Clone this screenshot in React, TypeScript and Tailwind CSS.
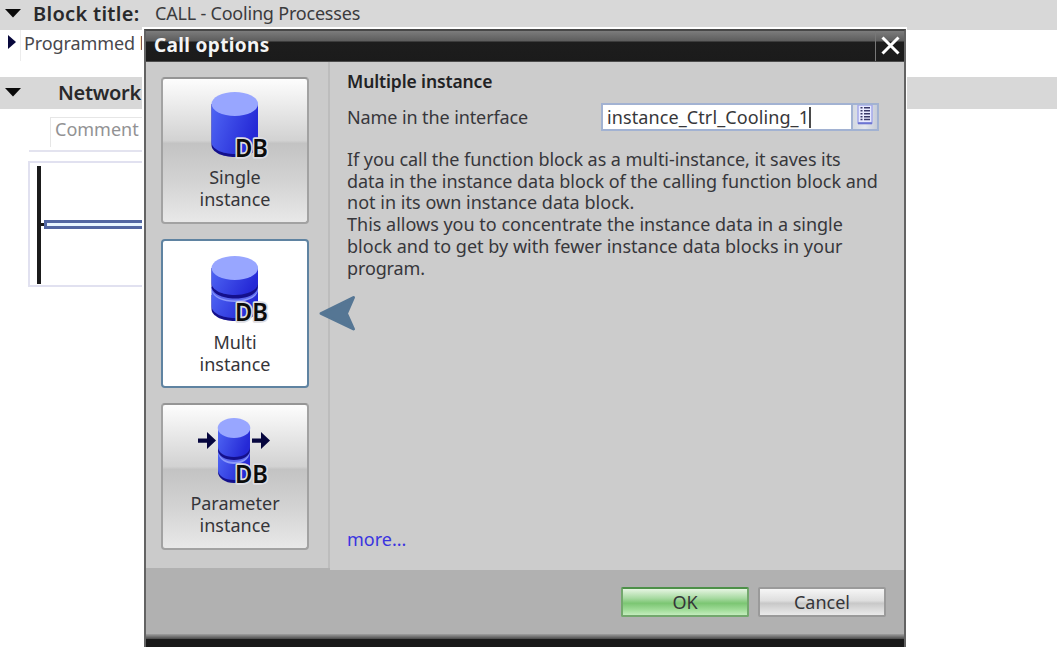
import type { ReactNode } from "react";
import { clsx } from "clsx";

type Variant = "single" | "multi" | "parameter";

/** Lines of the help text, broken where the dialog breaks them */
const DESCRIPTION = [
  { text: "If you call the function block as a multi-instance, it saves its", tracking: "tracking-[-0.06px]" },
  { text: "data in the instance data block of the calling function block and", tracking: "tracking-[-0.04px]" },
  { text: "not in its own instance data block.", tracking: "tracking-[0.03px]" },
  { text: "This allows you to concentrate the instance data in a single", tracking: "tracking-[0px]" },
  { text: "block and to get by with fewer instance data blocks in your", tracking: "tracking-[0.02px]" },
  { text: "program.", tracking: "tracking-[-0.12px]" },
];

function DbLabel() {
  return (
    <text
      x="72"
      y="77.500"
      fontSize="25"
      fontWeight="600"
      textLength="33"
      lengthAdjust="spacingAndGlyphs"
      fill="#0c0c0c"
      stroke="#dcdce2"
      strokeWidth="3.500"
      strokeLinejoin="round"
      paintOrder="stroke"
      className="font-['Noto_Sans',sans-serif]"
    >
      DB
    </text>
  );
}

function DatabaseIcon({ variant }: { variant: Variant }) {
  const id = `body-${variant}`;
  return (
    <svg width="144" height="90" viewBox="0 0 144 90" className="block shrink-0">
      <defs>
        <linearGradient id={id} x1="0" y1="0" x2="1" y2="0.35">
          <stop offset="0" stopColor="#4f66f4" />
          <stop offset="1" stopColor="#2529d6" />
        </linearGradient>
      </defs>
      {variant === "single" && (
        <>
          <path d="M48.500 25V66C48.500 73 59 78 72 78S95 73 95 66V25Z" fill="#14108c" />
          <path d="M48.500 25V63C48.500 70 59 75 72 75S95 70 95 63V25Z" fill={`url(#${id})`} />
          <ellipse cx="71.800" cy="25" rx="23.300" ry="12" fill="#98a6ff" />
          <DbLabel />
        </>
      )}
      {variant === "multi" && (
        <g transform="translate(0 2)">
          <path d="M48.500 52V66C48.500 73 59 78 72 78S95 73 95 66V52Z" fill="#14108c" />
          <path d="M48.500 47V63C48.500 70 59 75 72 75S95 70 95 63V47Z" fill={`url(#${id})`} />
          <path d="M48.500 47C50 55 60 59 72 59S94 55 95 47V44H48.500Z" fill="#8b98fb" />
          <path d="M48.500 46C50 53 60 57.500 72 57.500S94 53 95 46V44H48.500Z" fill="#5c69ee" />
          <path d="M48.500 25V43C48.500 50.500 59 55.500 72 55.500S95 50.500 95 43V25Z" fill="#14108c" />
          <path d="M48.500 25V40C48.500 47 59 52 72 52S95 47 95 40V25Z" fill={`url(#${id})`} />
          <ellipse cx="71.800" cy="25" rx="23.300" ry="12" fill="#98a6ff" />
          <DbLabel />
        </g>
      )}
      {variant === "parameter" && (
        <>
          <path d="M55 52V67C55 73 62 78 71 78S87 73 87 67V52Z" fill="#14108c" />
          <path d="M55 47V65C55 71 62 75 71 75S87 71 87 65V47Z" fill={`url(#${id})`} />
          <path d="M55 47C56 55 63 59 71 59S86 55 87 47V44H55Z" fill="#8b98fb" />
          <path d="M55 46C56 53 63 57 71 57S86 53 87 46V44H55Z" fill="#5c69ee" />
          <path d="M55 23V45C55 51 62 55 71 55S87 51 87 45V23Z" fill="#14108c" />
          <path d="M55 23V42C55 48 62 52 71 52S87 48 87 42V23Z" fill={`url(#${id})`} />
          <ellipse cx="71" cy="23" rx="16.300" ry="10" fill="#98a6ff" />
          <path d="M35 33.500H44V27L53 35.500L44 44V37.700H35Z" fill="#06063e" />
          <path d="M89 33.500H98V27L107 35.500L98 44V37.700H89Z" fill="#06063e" />
          <DbLabel />
        </>
      )}
    </svg>
  );
}

function InstanceButton({
  variant,
  title,
  selected,
}: {
  variant: Variant;
  title: string;
  selected?: boolean;
}) {
  return (
    <button
      className={clsx(
        "flex w-[148px] shrink-0 flex-col items-center rounded-[4px] border-2 text-[18px] leading-[21.500px] text-[#353539]",
        selected
          ? "h-[149px] border-[#5f83a1] bg-white"
          : "h-[147px] border-[#a2a2a2] border-t-[#959595] bg-[linear-gradient(#fdfdfd_0%,#e4e4e4_25%,#d2d2d2_43%,#c3c3c3_45%,#d2d2d2_70%,#e8e8e8_100%)]",
      )}
    >
      <DatabaseIcon variant={variant} />
      <span className={clsx("block", selected ? "mt-[1px]" : "-mt-[2px]")}>
        {title}
        <br />
        instance
      </span>
    </button>
  );
}

function FooterButton({ primary, children }: { primary?: boolean; children: ReactNode }) {
  return (
    <button
      className={clsx(
        "h-[30px] w-[128px] rounded-[2px] border-2 text-[18px] leading-[26px] text-[#353539]",
        primary
          ? "border-[#73a86d] border-t-[#4d9048] bg-[linear-gradient(#e6f5e2_0%,#a8daa2_35%,#7cc673_55%,#a0dc98_80%,#c4edbd_100%)]"
          : "border-[#9a9a9a] bg-[linear-gradient(#f6f6f6_0%,#dedede_45%,#c8c8c8_55%,#dcdcdc_80%,#eaeaea_100%)]",
      )}
    >
      {children}
    </button>
  );
}

function Collapse() {
  return (
    <svg width="16" height="9" viewBox="0 0 16 9" className="shrink-0">
      <path d="M0 0H16L8 8.500Z" fill="#0a0a0a" />
    </svg>
  );
}

function Editor() {
  return (
    <div className="flex h-full flex-col">
      <div className="flex h-[30px] shrink-0 items-center bg-[#d8d8d8] pb-[4px] pl-[5px]">
        <Collapse />
        <span className="ml-[12px] w-[122px] whitespace-nowrap pt-[2px] text-[20px] font-semibold leading-[26px] tracking-[0.3px] text-[#29292b]">
          Block title:
        </span>
        <span className="text-[18px] tracking-[-0.2px] text-[#3b3b3d]">CALL - Cooling Processes</span>
      </div>
      <div className="flex h-[47px] shrink-0 items-start pl-[8px]">
        <svg width="9" height="14" viewBox="0 0 9 14" className="mt-[5px]">
          <path d="M0 0L8 7L0 14Z" fill="#08083c" />
        </svg>
        <div className="ml-[3px] h-[31px] border-l border-[#ececec] pl-[3px] text-[18px] leading-[27px] tracking-[-0.1px] text-[#48484c]">
          Programmed by
        </div>
      </div>
      <div className="flex h-[32px] shrink-0 items-center bg-[#d8d8d8] pb-[2px] pl-[5px]">
        <Collapse />
        <span className="ml-[37px] pt-[2px] text-[20px] font-semibold leading-[28px] tracking-[-0.3px] text-[#29292b]">
          Network 1:
        </span>
      </div>
      <div className="ml-[50px] mt-[8px] h-[30px] w-[240px] border-l border-t border-[#e6e6e6] pl-[4px] text-[18px] leading-[22px] text-[#929294]">
        Comment
      </div>
      <div className="ml-[29px] mt-[3px] h-[2px] w-[240px] bg-[#e3e3ef]" />
      <div className="ml-[28px] mt-[9px] flex h-[126px] w-[240px] items-center border-2 border-[#e1e1f0] pl-[7px] pt-[1px]">
        <div className="h-[118px] w-[4px] bg-[#1b1b1b]" />
        <div className="h-[3px] w-[3px] bg-[#1b1b1b]" />
        <div className="h-[9px] flex-1 border-[3px] border-r-0 border-[#5266a2] bg-[#e8f5ff]" />
      </div>
    </div>
  );
}

function NameField() {
  return (
    <div className="flex h-[28px] w-[278px] border-2 border-[#a2b2d2] bg-white">
      <div className="flex flex-1 items-center pb-[1px] pl-[4px] text-[18px] leading-[22px] text-[#37373a]">
        <span className="tracking-[0.1px]">instance_Ctrl_Cooling_1</span>
        <span className="mt-[1px] h-[21px] w-[2px] bg-[#4a4a4a]" />
      </div>
      <div className="flex w-[26px] justify-center border-l-2 border-[#a2b2d2] bg-[linear-gradient(90deg,#d4d9e2,#e4e7ed_50%,#c7ccd8)]">
        <svg width="18" height="20" viewBox="0 0 18 20">
          <path d="M2 0H16V18H2Z" fill="#e8eaff" stroke="#a4a9ea" strokeWidth="1.500" />
          <path d="M2 18.300H16" stroke="#6c74d2" strokeWidth="2" />
          <path
            d="M4.500 2.700H6.500M4.500 5.700H6.500M4.500 8.700H6.500M4.500 11.700H6.500M4.500 14.500H6.500M8 2.700H14M8 5.700H14M8 8.700H14M8 11.700H14M8 14.500H14"
            stroke="#383868"
            strokeWidth="1.500"
          />
        </svg>
      </div>
    </div>
  );
}

function CallOptionsDialog() {
  return (
    <div className="absolute left-[142px] top-[27px] flex h-[621px] w-[765px] flex-col border-2 border-r border-b border-white bg-[#b1b1b1]">
      <div className="flex h-full flex-col border-x-2 border-t-2 border-[#636363] border-t-[#484848]">
        <div className="flex h-[31px] shrink-0 border-b border-[#4c4c4c] bg-[linear-gradient(#7c7c7c_0px,#5d5d5d_10px,#1d1d1d_11px,#1b1b1b_31px)]">
          <div className="flex-1 pl-[8px] text-[19px] font-bold leading-[29px] tracking-[0.35px] text-[#f4f4f4]">Call options</div>
          <div className="flex w-[29px] items-center justify-center border-l border-[#777777]">
            <svg width="19" height="19" viewBox="0 0 19 19" className="-mt-[2px]">
              <path d="M1.500 1.500L17.500 17.500M17.500 1.500L1.500 17.500" stroke="#ffffff" strokeWidth="3" />
            </svg>
          </div>
        </div>

        <div className="flex h-[508px] shrink-0">
          <div className="flex h-[506px] w-[184px] shrink-0 flex-col gap-[15px] border-r-2 border-[#bdbdbd] bg-[#cbcbcb] pl-[15px] pt-[15px]">
            <InstanceButton variant="single" title="Single" />
            <InstanceButton variant="multi" title="Multi" selected />
            <InstanceButton variant="parameter" title="Parameter" />
          </div>
          <div className="flex flex-1 flex-col bg-[#cccccc] pl-[17px] pr-[25px] text-[18px] text-[#37373b]">
            <div className="mt-[8px] h-[22px] text-[17.500px] font-semibold leading-[23px] tracking-[-0.12px] text-[#222224]">
              Multiple instance
            </div>
            <div className="mt-[10px] flex h-[30px] items-center justify-between">
              <span className="pt-[1px] tracking-[-0.1px]">Name in the interface</span>
              <NameField />
            </div>
            <div className="mt-[17px] leading-[21.700px]">
              {DESCRIPTION.map((line) => (
                <div key={line.text} className={clsx("whitespace-nowrap", line.tracking)}>
                  {line.text}
                </div>
              ))}
            </div>
            <div className="mb-[20px] mt-auto leading-[22px] text-[#3a34e0]">more...</div>
          </div>
        </div>

        <div className="flex flex-1 justify-end gap-[9px] pr-[18px] pt-[17px]">
          <FooterButton primary>OK</FooterButton>
          <FooterButton>Cancel</FooterButton>
        </div>
        <div className="h-[5px] shrink-0 bg-[linear-gradient(#a0a0a0,#4a4a4a)]" />
        <div className="h-[8px] shrink-0 bg-[#1a1a1a]" />
      </div>

      {/* pointer next to the selected instance type */}
      <svg width="37" height="37" viewBox="0 0 37 37" className="absolute left-[175px] top-[266px]">
        <path d="M2 18.500L34.500 2.500L27.500 18.500L34.500 34Z" fill="#557694" stroke="#557694" strokeWidth="3" strokeLinejoin="round" />
      </svg>
    </div>
  );
}

export default function App() {
  return (
    <div className="relative h-[671px] w-[1057px] overflow-hidden bg-white font-['Noto_Sans','Open_Sans',sans-serif]">
      <Editor />
      <CallOptionsDialog />
    </div>
  );
}
